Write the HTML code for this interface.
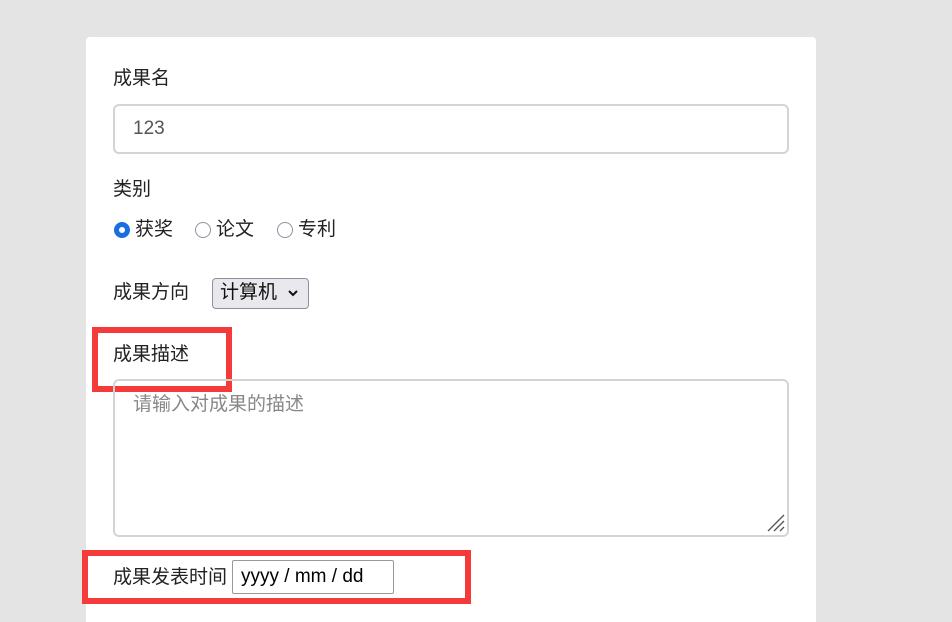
<!DOCTYPE html>
<html><head><meta charset="utf-8"><style>
html,body{margin:0;width:952px;height:622px;overflow:hidden;}
body{background:#e4e4e4;position:relative;font-family:"Liberation Sans","Noto Sans CJK SC",sans-serif;color:#222;}
.a{position:absolute;}
.card{left:86px;top:37px;width:730px;height:600px;background:#fff;border-radius:4px;}
.t{font-size:19px;line-height:20px;white-space:nowrap;}
.r{border:1.5px solid #8f8f9d;border-radius:50%;box-sizing:border-box;width:16px;height:16px;}
.red{border:6px solid #f53a3a;box-sizing:border-box;}
</style></head><body>
<div class="a card"></div>
<div class="a t" style="left:113px;top:69px">成果名</div>
<div class="a" style="left:113px;top:104px;width:676px;height:50px;border:2px solid #d4d4d4;border-radius:6px;box-sizing:border-box"></div>
<div class="a t" style="left:133px;top:119px;color:#555">123</div>
<div class="a t" style="left:113px;top:180px">类别</div>
<div class="a r" style="left:114px;top:222px;border:5px solid #1a6fe0;background:#fff"></div>
<div class="a t" style="left:135px;top:220px">获奖</div>
<div class="a r" style="left:195px;top:222px"></div>
<div class="a t" style="left:216px;top:220px">论文</div>
<div class="a r" style="left:277px;top:222px"></div>
<div class="a t" style="left:298px;top:220px">专利</div>
<div class="a t" style="left:113px;top:283px">成果方向</div>
<div class="a" style="left:212px;top:278px;width:97px;height:31px;background:#e9e9ed;border:1px solid #8f8f9d;border-radius:4px;box-sizing:border-box"></div>
<div class="a t" style="left:220px;top:283px;color:#111">计算机</div>
<svg class="a" style="left:287px;top:289px" width="12" height="9"><path d="M2 2 L6 6 L10 2" stroke="#111" stroke-width="2" fill="none"/></svg>
<div class="a red" style="left:92px;top:327px;width:140px;height:65px"></div>
<div class="a t" style="left:113px;top:345px">成果描述</div>
<div class="a" style="left:113px;top:379px;width:676px;height:158px;border:2px solid #d4d4d4;border-radius:6px;box-sizing:border-box"></div>
<div class="a t" style="left:133px;top:395px;color:#888">请输入对成果的描述</div>
<svg class="a" style="left:767px;top:514px" width="18" height="18"><path d="M17 1 L1 17 M17 7 L7 17 M17 13 L13 17" stroke="#555" stroke-width="1.3"/></svg>
<div class="a red" style="left:82px;top:550px;width:389px;height:54px"></div>
<div class="a t" style="left:113px;top:568px">成果发表时间</div>
<div class="a" style="left:232px;top:560px;width:162px;height:34px;border:1px solid #999;border-radius:2px;box-sizing:border-box"></div>
<div class="a t" style="left:241px;top:567px;color:#000;font-size:19px">yyyy / mm / dd</div>
</body></html>
